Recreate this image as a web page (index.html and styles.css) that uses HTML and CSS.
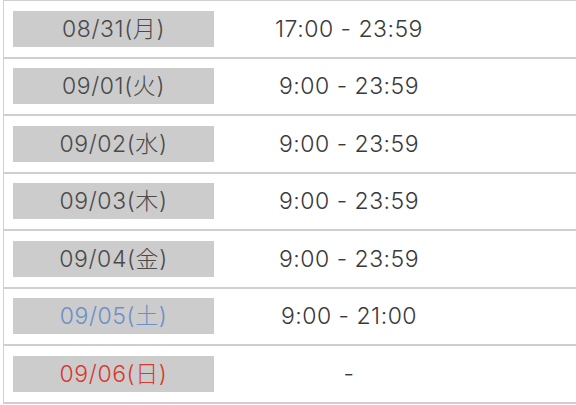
FILE: index.html
```html
<!DOCTYPE html>
<html lang="ja">
<head>
<meta charset="utf-8">
<link rel="stylesheet" href="styles.css">
</head>
<body>
<div class="schedule">
  <div class="row"><div class="date">08/31(月)</div><div class="time">17:00 - 23:59</div></div>
  <div class="row"><div class="date">09/01(火)</div><div class="time">9:00 - 23:59</div></div>
  <div class="row"><div class="date">09/02(水)</div><div class="time">9:00 - 23:59</div></div>
  <div class="row"><div class="date">09/03(木)</div><div class="time">9:00 - 23:59</div></div>
  <div class="row"><div class="date">09/04(金)</div><div class="time">9:00 - 23:59</div></div>
  <div class="row"><div class="date sat">09/05(土)</div><div class="time">9:00 - 21:00</div></div>
  <div class="row"><div class="date sun">09/06(日)</div><div class="time">-</div></div>
</div>
</body>
</html>
```

FILE: styles.css
```css
html, body {
  margin: 0;
  padding: 0;
  background: #fff;
}
body {
  padding-left: 3px;
  font-family: Inter, "Noto Sans CJK JP", sans-serif;
  font-weight: 300;
}
.schedule {
  border-left: 1px solid #d0d0d0;
  border-top: 2px solid #cfcfcf;
  margin-top: -1px;
}
.row {
  display: flex;
  align-items: center;
  height: 55.5px;
  border-bottom: 2px solid #cfcfcf;
  padding-left: 9px;
}
.date {
  width: 201px;
  height: 36px;
  background: #cccccc;
  color: #4a4a4a;
  font-size: 23px;
  letter-spacing: 0.6px;
  line-height: 36px;
  text-align: center;
}
.date.sat { color: #6b8fc8; }
.date.sun { color: #d9382f; }
.time {
  width: 270px;
  text-align: center;
  color: #3a3a3a;
  font-size: 23px;
  letter-spacing: 0.5px;
  line-height: 36px;
}
```
